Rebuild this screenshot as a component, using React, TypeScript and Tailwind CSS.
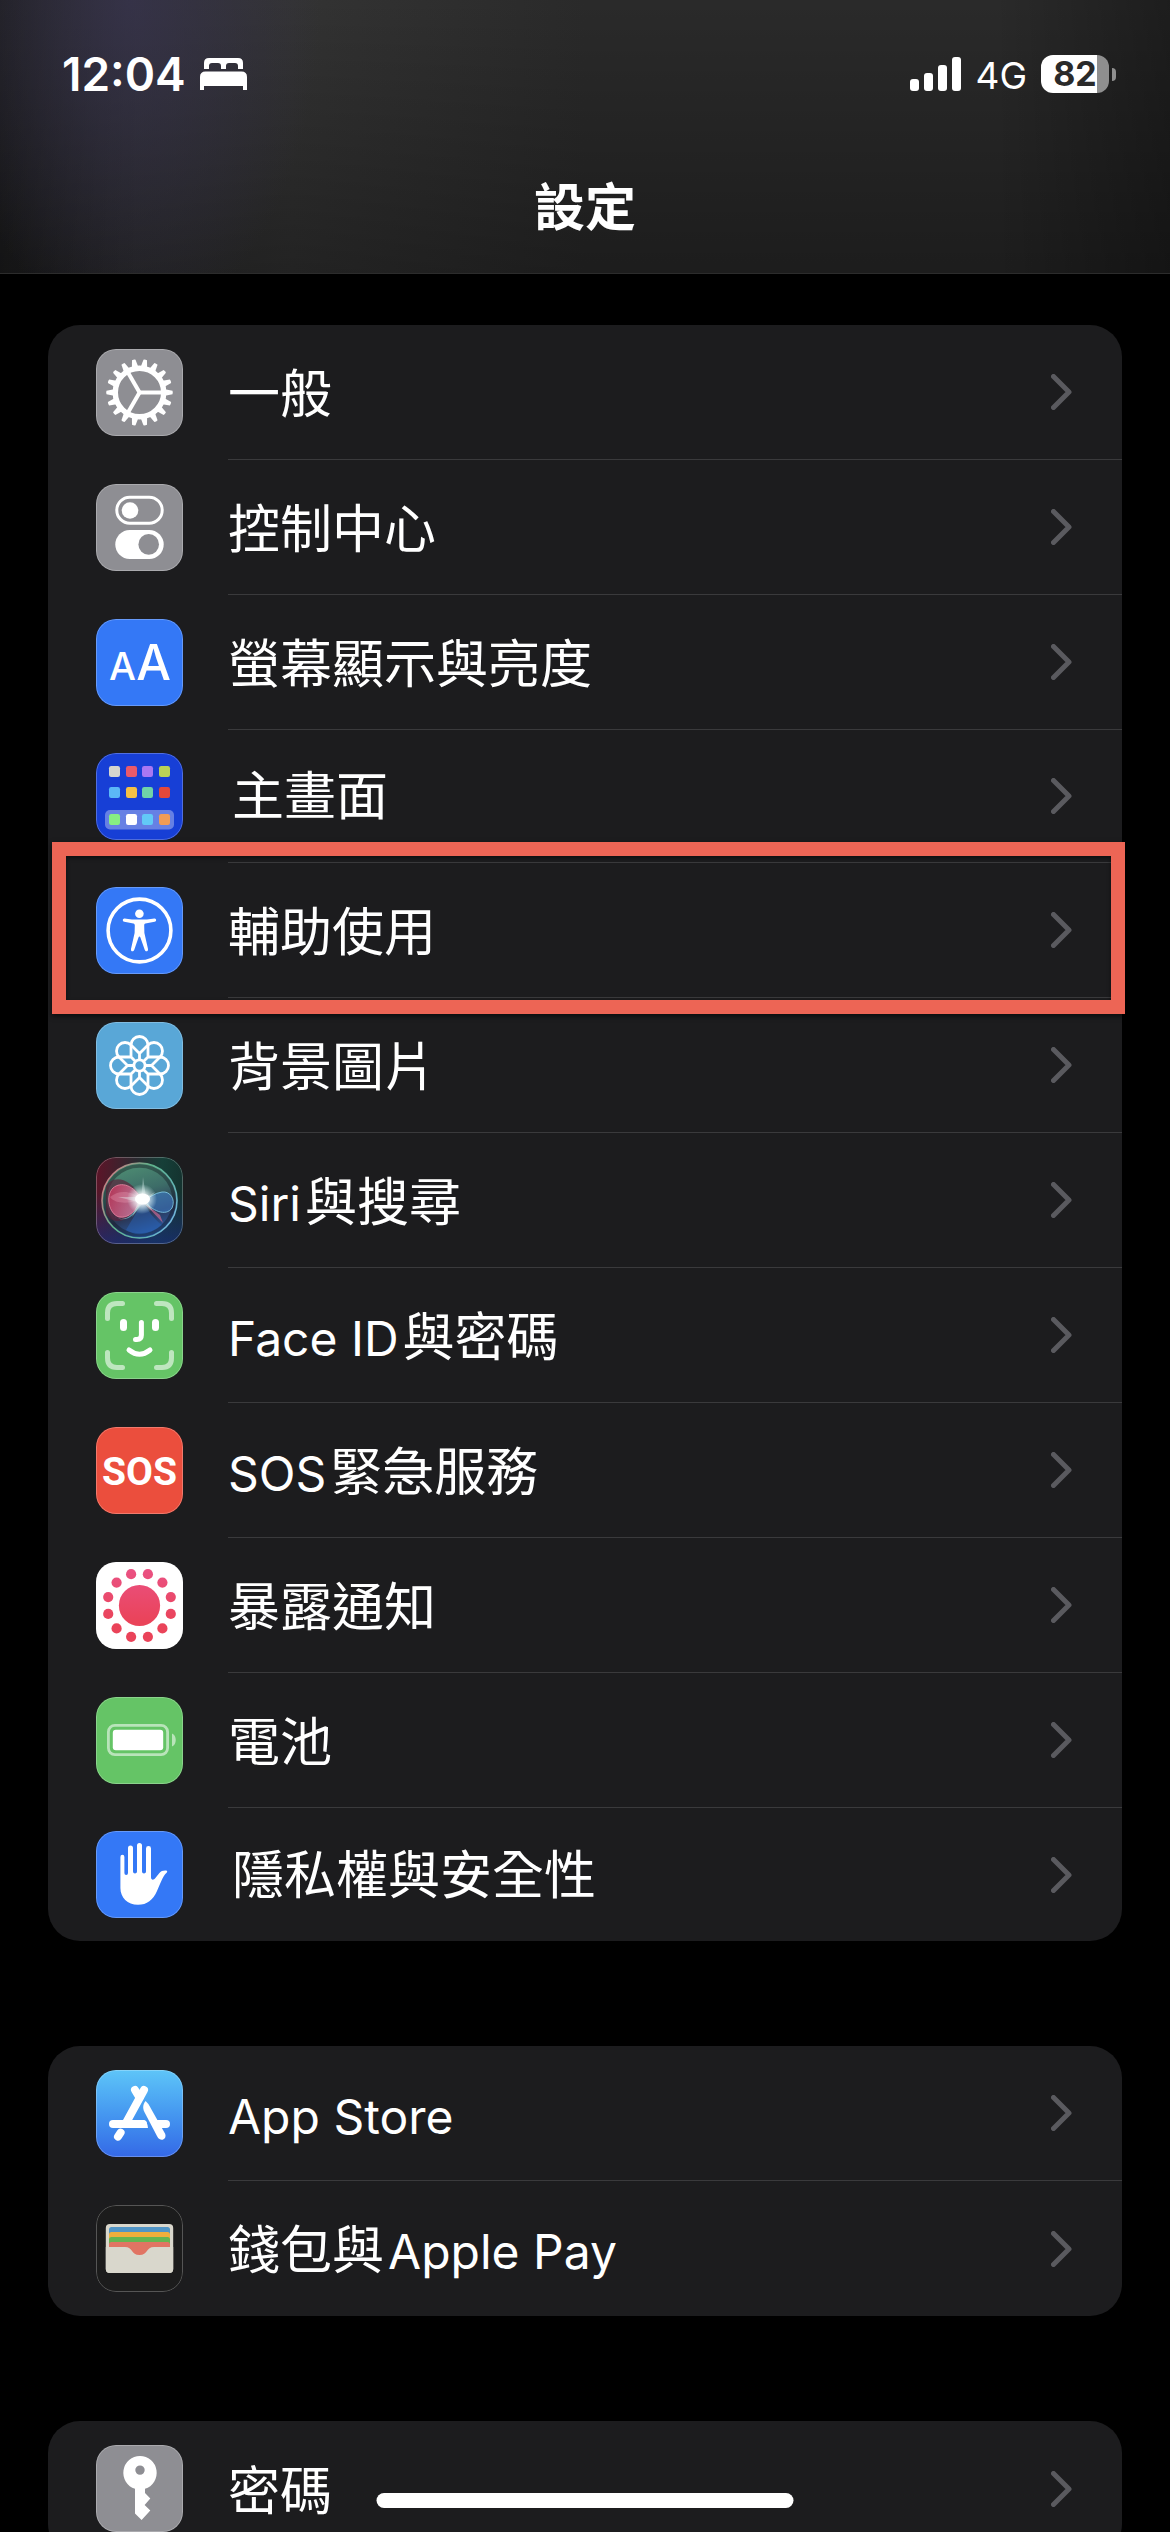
import type { ReactNode } from 'react';
import clsx from 'clsx';

interface SettingsItem {
  label: string;
  icon: ReactNode;
  tile: string;
  compact?: boolean;
  highlighted?: boolean;
}

const GEAR_TEETH = Array.from({ length: 18 }, (_, i) => i * 20);
const PETALS = Array.from({ length: 8 }, (_, i) => i * 45);
const EXPOSURE_DOTS = Array.from({ length: 12 }, (_, i) => ((15 + i * 30) * Math.PI) / 180);
const HOME_COLUMNS = [13, 30, 46, 63];
const HOME_ROWS = [
  { y: 13, colors: ['#d6d6ce', '#e95a6a', '#a877f3', '#b9d256'] },
  { y: 34, colors: ['#5bb8f7', '#f5c044', '#6fd3a8', '#e5483a'] },
  { y: 61, colors: ['#87ee82', '#ffffff', '#62c9f7', '#f09c55'] },
];

function Glyph({ children }: { children: ReactNode }) {
  return (
    <svg viewBox="0 0 87 87" className="block size-full" aria-hidden="true">
      {children}
    </svg>
  );
}

function GearIcon() {
  return (
    <Glyph>
      <g transform="translate(43.5 43.5)">
        <circle r="24.2" fill="none" stroke="#fff" strokeWidth="5.4" />
        {GEAR_TEETH.map((angle) => (
          <path key={angle} d="M25.5 -3.2 L33 -1.8 Q33.6 0 33 1.8 L25.5 3.2 Z" fill="#fff" transform={`rotate(${angle})`} />
        ))}
        {[0, 120, 240].map((angle) => (
          <path key={angle} d="M-1 0 H23" stroke="#fff" strokeWidth="4" transform={`rotate(${angle})`} />
        ))}
      </g>
    </Glyph>
  );
}

function TogglesIcon() {
  return (
    <Glyph>
      <rect x="20.8" y="13.2" width="45.4" height="26" rx="13" fill="none" stroke="#fff" strokeWidth="3" />
      <circle cx="34" cy="26.5" r="8.3" fill="#fff" />
      <rect x="19.3" y="46" width="48.4" height="29" rx="14.5" fill="#fff" />
      <circle cx="52.7" cy="60.4" r="10.3" fill="#8e8e93" />
    </Glyph>
  );
}

function TextSizeIcon() {
  return (
    <Glyph>
      <g fill="#fff" textAnchor="middle" className="font-['Inter',sans-serif] font-medium">
        <text x="26.5" y="61" fontSize="38">A</text>
        <text x="57.5" y="61" fontSize="49">A</text>
      </g>
    </Glyph>
  );
}

function HomeScreenIcon() {
  return (
    <Glyph>
      <rect x="9" y="57" width="69" height="19.5" rx="5" fill="#fff" fillOpacity="0.34" />
      {HOME_ROWS.map((row) =>
        row.colors.map((color, i) => (
          <rect key={color} x={HOME_COLUMNS[i]} y={row.y} width="11" height="11" rx="2.2" fill={color} />
        )),
      )}
    </Glyph>
  );
}

function AccessibilityIcon() {
  return (
    <Glyph>
      <circle cx="43.5" cy="43.5" r="31.4" fill="none" stroke="#fff" strokeWidth="3.6" />
      <circle cx="43.4" cy="26.7" r="4.3" fill="#fff" />
      <path
        d="M28.6 31.4 C33 32.2 39 32.6 43.4 32.6 C47.8 32.6 54 32.2 58.4 31.4 C60.6 31.2 60.8 34.3 58.6 34.8 L49.4 36.6 C48.4 36.9 48.2 37.4 48.2 38.4 L48.4 46 L52 62 C52.4 64.6 49.6 65.2 48.8 63 L44.4 50.4 C44 49.2 42.9 49.2 42.5 50.4 L38.2 63 C37.3 65.2 34.4 64.6 35 62 L38.6 46 L38.8 38.4 C38.8 37.4 38.4 36.9 37.4 36.6 L28.3 34.8 C26.2 34.3 26.4 31.2 28.6 31.4 Z"
        fill="#fff"
      />
    </Glyph>
  );
}

function WallpaperIcon() {
  return (
    <Glyph>
      <g transform="translate(43.5 43.5)" fill="none" stroke="#fff" strokeWidth="2.8" strokeLinejoin="round">
        <circle r="5.6" />
        {PETALS.map((angle) => (
          <path key={angle} d="M0 -5.6 V-12 L-8.5 -20.5 A8.5 8.5 0 0 1 8.5 -20.5 L0 -12" transform={`rotate(${angle})`} />
        ))}
      </g>
    </Glyph>
  );
}

function SiriIcon() {
  return (
    <Glyph>
      <defs>
        <linearGradient id="siri-base" x1="0" y1="0.1" x2="1" y2="0.2">
          <stop offset="0" stopColor="#5e1428" />
          <stop offset="0.45" stopColor="#2b2a30" />
          <stop offset="0.75" stopColor="#163f38" />
          <stop offset="1" stopColor="#14332f" />
        </linearGradient>
        <linearGradient id="siri-shade" x1="0" y1="0.4" x2="0" y2="1">
          <stop offset="0" stopColor="#1b2f6e" stopOpacity="0" />
          <stop offset="1" stopColor="#182c78" stopOpacity="0.75" />
        </linearGradient>
        <linearGradient id="siri-orb" x1="0.3" y1="0" x2="0.6" y2="1">
          <stop offset="0" stopColor="#4f8f73" />
          <stop offset="0.4" stopColor="#3d6d68" />
          <stop offset="0.7" stopColor="#2a3858" />
          <stop offset="1" stopColor="#2a5fae" />
        </linearGradient>
        <linearGradient id="siri-rim" x1="0" y1="0.2" x2="1" y2="0.8">
          <stop offset="0" stopColor="#d87784" />
          <stop offset="0.4" stopColor="#5fb48b" />
          <stop offset="0.8" stopColor="#63b4b8" />
          <stop offset="1" stopColor="#79b7ea" />
        </linearGradient>
        <linearGradient id="siri-pink" x1="0" y1="0" x2="1" y2="0.4">
          <stop offset="0" stopColor="#d42f58" />
          <stop offset="1" stopColor="#d98bb0" />
        </linearGradient>
        <radialGradient id="siri-glow">
          <stop offset="0" stopColor="#fff" />
          <stop offset="0.3" stopColor="#fff" stopOpacity="0.9" />
          <stop offset="1" stopColor="#dff" stopOpacity="0" />
        </radialGradient>
      </defs>
      <rect width="87" height="87" fill="url(#siri-base)" />
      <rect width="87" height="87" fill="url(#siri-shade)" />
      <circle cx="43.5" cy="43.5" r="37.5" fill="url(#siri-orb)" stroke="url(#siri-rim)" strokeWidth="1.6" />
      <circle cx="43.5" cy="43.5" r="34.5" fill="none" stroke="#10151c" strokeOpacity="0.4" strokeWidth="3.5" />
      <path d="M10 30 C14 20 32 16 46 42 C36 66 16 70 10 56 Z" fill="#5b1f38" fillOpacity="0.65" />
      <path d="M46 43 C38 28 25 24 17 31 C9 39 13 57 23 60 C34 62 40 52 46 43 Z" fill="url(#siri-pink)" fillOpacity="0.75" stroke="#f08aa8" strokeWidth="0.8" />
      <path d="M46 43 C34 32 22 34 14 40 C20 48 34 46 46 43 Z" fill="#f3a6bd" fillOpacity="0.3" />
      <path d="M14 55 C24 68 36 62 46 43 C40 60 26 70 14 55 Z" fill="#7cc4d0" fillOpacity="0.7" />
      <path d="M47 43 C56 54 70 60 76 51 C80 42 74 34 66 35 C58 36 54 41 47 43 Z" fill="#3d7cc4" fillOpacity="0.6" stroke="#86d2ee" strokeWidth="0.8" />
      <path d="M30 73 C36 62 42 54 47 43 C52 54 58 62 66 68 C54 78 40 80 30 73 Z" fill="#2967bf" fillOpacity="0.45" />
      <path d="M48 46 L64 58 L67 66 Z" fill="#d56a93" fillOpacity="0.65" />
      <path d="M45 43 L47 20 L50 40 L59 35 L51 44 L57 54 L47 46 L36 60 L42 45 L22 40 L42 40 Z" fill="#e9fffb" fillOpacity="0.35" />
      <circle cx="46" cy="42" r="15" fill="url(#siri-glow)" />
      <ellipse cx="46.5" cy="42" rx="7.5" ry="5.5" fill="#fff" />
    </Glyph>
  );
}

function FaceIdIcon() {
  return (
    <Glyph>
      <g fill="none" stroke="#fff" strokeLinecap="round" strokeLinejoin="round">
        <path
          d="M11.5 26.5 V21 Q11.5 11.5 21 11.5 H26.5 M60.5 11.5 H66 Q75.5 11.5 75.5 21 V26.5 M75.5 60.5 V66 Q75.5 75.5 66 75.5 H60.5 M26.5 75.5 H21 Q11.5 75.5 11.5 66 V60.5"
          strokeOpacity="0.58"
          strokeWidth="5"
        />
        <path d="M45.4 30.5 V43 Q45.4 47.4 41 47.4 H39.5" strokeWidth="5" />
        <path d="M33 58 Q43.5 66.5 54 58" strokeWidth="5" />
      </g>
      <rect x="24" y="27" width="7" height="12" rx="3.5" fill="#fff" />
      <rect x="56" y="27" width="7" height="12" rx="3.5" fill="#fff" />
    </Glyph>
  );
}

function SosIcon() {
  return (
    <Glyph>
      <text x="43.5" y="58" fontSize="39" fill="#fff" textAnchor="middle" className="font-['Roboto',sans-serif] font-bold">
        SOS
      </text>
    </Glyph>
  );
}

function ExposureIcon() {
  return (
    <Glyph>
      <defs>
        <linearGradient id="exposure" gradientUnits="userSpaceOnUse" x1="0" y1="6" x2="0" y2="60">
          <stop offset="0" stopColor="#ea5284" />
          <stop offset="1" stopColor="#ea4359" />
        </linearGradient>
      </defs>
      <g fill="url(#exposure)">
        <circle cx="43.5" cy="43.5" r="20.6" />
        {EXPOSURE_DOTS.map((angle) => (
          <circle key={angle} cx={43.5 + 32.4 * Math.cos(angle)} cy={43.5 + 32.4 * Math.sin(angle)} r="5.1" />
        ))}
      </g>
    </Glyph>
  );
}

function BatteryIcon() {
  return (
    <Glyph>
      <rect x="12.4" y="28.4" width="59.2" height="29.2" rx="6.5" fill="none" stroke="#fff" strokeOpacity="0.55" strokeWidth="2.8" />
      <rect x="16.8" y="32.8" width="50.4" height="20.4" rx="3" fill="#fff" />
      <path d="M76 36.5 C81 38.5 81 47.5 76 49.5 Z" fill="#fff" fillOpacity="0.55" />
    </Glyph>
  );
}

function HandIcon() {
  return (
    <Glyph>
      <path
        d="M24.4 26 Q24.4 23.8 26.4 23.8 Q28.4 23.8 28.4 26 V42 Q28.4 44 30.2 44 Q32 44 32 42 V17 Q32 14.4 34.5 14.4 Q37 14.4 37 17 V40.5 Q37 42.4 39 42.4 Q41 42.4 41 40.5 V14.6 Q41 12 43.4 12 Q46 12 46 14.6 V40.5 Q46 42.4 48 42.4 Q50 42.4 50 40.5 V17.4 Q50 15 52.5 15 Q55 15 55 17.4 V46 C55 49 57.4 49.6 59.4 47 L63 42.4 C65 40 67.4 39.4 70 39.6 C71.4 39.8 71.6 40.8 70.6 41.8 C66.4 45.4 64 54 61 60 C57 69 51 73.8 42 73.8 C31.4 73.8 24.4 66.4 24.4 57 Z"
        fill="#fff"
      />
    </Glyph>
  );
}

function AppStoreIcon() {
  return (
    <Glyph>
      <g fill="none" stroke="#fff" strokeWidth="8" strokeLinecap="round">
        <path d="M39 20 L43.5 27.5" />
        <path d="M48 20 L30.5 52" />
        <path d="M17 54 H47" />
        <path d="M61 54 H70" />
        <path d="M24.6 62.6 L22 66.6" />
      </g>
      <path d="M27 50 H47 Q51 50 52 58 H26 Z" fill="#fff" />
      <path d="M49.6 31 C47 34 46.4 38 48.4 42 L61.5 67 C64.4 72 71.4 69.4 69 63.4 L52.4 34 Z" fill="#fff" />
    </Glyph>
  );
}

function WalletIcon() {
  return (
    <Glyph>
      <rect x="9.8" y="19" width="67.4" height="49" rx="4" fill="#d9d7cc" />
      <path d="M13 42 V24.5 Q13 22 15.5 22 H71.5 Q74 22 74 24.5 V42 Z" fill="#5195c6" />
      <path d="M13 42 V29.5 Q13 27 15.5 27 H71.5 Q74 27 74 29.5 V42 Z" fill="#f0ae3c" />
      <path d="M13 42 V34.5 Q13 32 15.5 32 H71.5 Q74 32 74 34.5 V42 Z" fill="#65b551" />
      <path d="M13 43 V39.5 Q13 37 15.5 37 H71.5 Q74 37 74 39.5 V43 Z" fill="#e17463" />
      <rect x="28" y="40" width="31" height="12" fill="#e17463" />
      <path d="M9.8 42 H29 C37 42 35 50 43.5 50 C52 50 50 42 58 42 H77.2 V64 Q77.2 68 73.2 68 H13.8 Q9.8 68 9.8 64 Z" fill="#d9d7cc" />
    </Glyph>
  );
}

function KeyIcon() {
  return (
    <Glyph>
      <path
        fillRule="evenodd"
        d="M44 11 A16.8 16.8 0 0 1 49 43.8 V48 L54.3 53.6 L48.6 60 L54.3 65.6 L45.6 75 L39 68.4 V43.8 A16.8 16.8 0 0 1 44 11 Z M44 20.4 A4.7 4.7 0 1 0 44 29.8 A4.7 4.7 0 1 0 44 20.4 Z"
        fill="#fff"
      />
    </Glyph>
  );
}

const GROUPS: SettingsItem[][] = [
  [
    { label: '一般', icon: <GearIcon />, tile: 'bg-[#8e8e93]' },
    { label: '控制中心', icon: <TogglesIcon />, tile: 'bg-[#8e8e93]' },
    { label: '螢幕顯示與亮度', icon: <TextSizeIcon />, tile: 'bg-[#3478f6]' },
    { label: '主畫面', icon: <HomeScreenIcon />, tile: 'bg-[#173fd6]', compact: true },
    { label: '輔助使用', icon: <AccessibilityIcon />, tile: 'bg-[#3478f6]', highlighted: true },
    { label: '背景圖片', icon: <WallpaperIcon />, tile: 'bg-[#59a7d7]' },
    { label: 'Siri與搜尋', icon: <SiriIcon />, tile: 'bg-[#1c1c1e]' },
    { label: 'Face ID與密碼', icon: <FaceIdIcon />, tile: 'bg-[#65c466]' },
    { label: 'SOS緊急服務', icon: <SosIcon />, tile: 'bg-[#eb4e3d]' },
    { label: '暴露通知', icon: <ExposureIcon />, tile: 'bg-white' },
    { label: '電池', icon: <BatteryIcon />, tile: 'bg-[#65c466]' },
    { label: '隱私權與安全性', icon: <HandIcon />, tile: 'bg-[#3478f6]', compact: true },
  ],
  [
    { label: 'App Store', icon: <AppStoreIcon />, tile: 'bg-linear-to-b from-[#5ec5f8] to-[#3568e6]' },
    { label: '錢包與Apple Pay', icon: <WalletIcon />, tile: 'bg-[#1c1c1c]' },
  ],
  [{ label: '密碼', icon: <KeyIcon />, tile: 'bg-[#8e8e93]' }],
];

// Latin runs sit a little smaller than the Han glyphs and get some air around them.
function Label({ text, compact }: { text: string; compact?: boolean }) {
  return (
    <span className={clsx('text-[52px] leading-[60px] whitespace-nowrap', compact ? 'pt-0.5 pl-1' : 'pt-1.5')}>
      {text.split(/([A-Za-z ]+)/).filter(Boolean).map((part, i) =>
        /[A-Za-z]/.test(part) ? (
          <span key={part} className={clsx('text-[48px]', i > 0 ? 'ml-1' : 'mr-1')}>
            {part}
          </span>
        ) : (
          part
        ),
      )}
    </span>
  );
}

function Chevron() {
  return (
    <svg viewBox="0 0 21 36" className="h-9 w-[21px] shrink-0" aria-hidden="true">
      <path d="M2.5 2.5 L18 18 L2.5 33.5" fill="none" stroke="#5a5a5f" strokeWidth="5" strokeLinecap="round" strokeLinejoin="round" />
    </svg>
  );
}

function SettingsRow({ item, last }: { item: SettingsItem; last: boolean }) {
  return (
    <li className="relative">
      <a href="#" className={clsx('flex items-center gap-[45px] pl-12', item.compact ? 'h-[133px]' : 'h-[135px]')}>
        <span className={clsx('relative size-[87px] shrink-0 overflow-hidden rounded-[20px]', item.tile)}>
          {item.icon}
          <span className="absolute inset-0 rounded-[20px] border border-white/25" />
        </span>
        <span className={clsx('flex flex-1 items-center justify-between self-stretch pr-[50px]', !last && 'border-b border-[#3a3a3c]')}>
          <Label text={item.label} compact={item.compact} />
          <Chevron />
        </span>
      </a>
      {item.highlighted && (
        <span className="pointer-events-none absolute -top-[21px] right-[-3px] -bottom-4 left-1 z-10 border-14 border-[#ed6555] shadow-[0_2px_5px_rgba(0,0,0,0.6),inset_0_2px_4px_rgba(0,0,0,0.5)]" />
      )}
    </li>
  );
}

function StatusBar() {
  return (
    <div className="flex h-[148px] items-center justify-between pr-[54px] pl-[62px]">
      <div className="flex items-center gap-3.5">
        <time className="text-[46px] leading-[48px] font-semibold">12:04</time>
        <svg viewBox="0 0 47 32" className="h-8 w-[47px]" aria-hidden="true">
          <path d="M4 11 V5 Q4 0 9 0 H38 Q43 0 43 5 V11 H38 V8 Q38 5 35 5 H29 Q26 5 26 8 V11 H21 V8 Q21 5 18 5 H12 Q9 5 9 8 V11 Z" fill="#fff" />
          <path d="M0 32 V19 Q0 13.5 5.5 13.5 H41.5 Q47 13.5 47 19 V32 H43 V28 H4 V32 Z" fill="#fff" />
        </svg>
      </div>
      <div className="flex items-center gap-3.5">
        <div className="flex items-end gap-[5px]" role="img" aria-label="Signal">
          <span className="h-3 w-[9px] rounded-[3px] bg-white" />
          <span className="h-[18px] w-[9px] rounded-[3px] bg-white" />
          <span className="h-[26px] w-[9px] rounded-[3px] bg-white" />
          <span className="h-[34px] w-[9px] rounded-[3px] bg-white" />
        </div>
        <span className="pt-1 text-[37px] leading-[48px]">4G</span>
        <div className="flex items-center gap-[3px]">
          <div className="flex h-[38px] w-[68px] items-center justify-center rounded-xl bg-linear-to-r from-white from-82% to-[#8f8f8f] to-82%">
            <span className="text-[34px] leading-[38px] font-bold text-[#2a2a2a]">82</span>
          </div>
          <span className="h-[13px] w-1 rounded-r-full bg-[#8f8f8f]" />
        </div>
      </div>
    </div>
  );
}

export default function App() {
  return (
    <div className="relative flex h-screen flex-col overflow-hidden bg-black font-['Inter','Noto_Sans_CJK_TC',sans-serif] text-white">
      <header className="h-[274px] shrink-0 border-b border-[#2c2c2c] bg-[radial-gradient(ellipse_190px_330px_at_130px_0px,rgba(56,52,80,0.75),transparent),linear-gradient(to_right,rgba(0,0,0,0.3),transparent_12%,transparent_85%,rgba(0,0,0,0.3)),linear-gradient(to_bottom,rgba(0,0,0,0),rgba(0,0,0,0.32)),linear-gradient(to_right,#2a2a2c,#333333_25%,#2a2a2a_50%,#2a2a2a)]">
        <StatusBar />
        <h1 className="text-center text-[51px] leading-[120px] font-bold">設定</h1>
      </header>
      <main className="flex flex-col gap-[105px] px-12 pt-[51px]">
        {GROUPS.map((group) => (
          <ul key={group[0].label} className="rounded-[32px] bg-[#1c1c1e]">
            {group.map((item, i) => (
              <SettingsRow key={item.label} item={item} last={i === group.length - 1} />
            ))}
          </ul>
        ))}
      </main>
      <div className="absolute bottom-6 left-1/2 h-[15px] w-[417px] -translate-x-1/2 rounded-full bg-white" />
    </div>
  );
}
